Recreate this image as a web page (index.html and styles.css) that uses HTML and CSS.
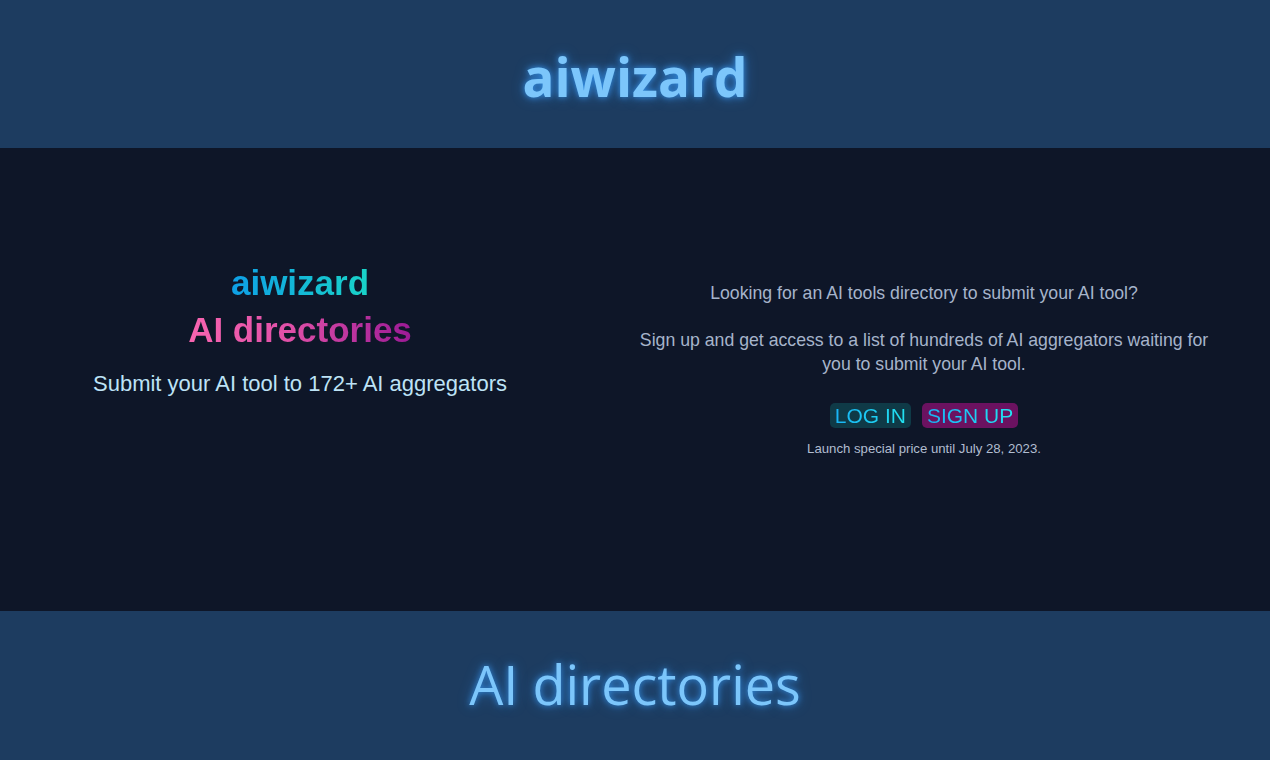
FILE: index.html
```html
<!DOCTYPE html>
<html>
<head>
<meta charset="utf-8">
<link rel="stylesheet" href="styles.css">
</head>
<body>
<header class="band top">
  <h1 class="glow bold">aiwizard</h1>
</header>
<main class="hero">
  <section class="left">
    <div class="brand">aiwizard</div>
    <div class="brand2">AI directories</div>
    <p class="sub">Submit your AI tool to 172+ AI aggregators</p>
  </section>
  <section class="right">
    <p class="p1">Looking for an AI tools directory to submit your AI tool?</p>
    <p class="p2">Sign up and get access to a list of hundreds of AI aggregators waiting for you to submit your AI tool.</p>
    <div class="btns">
      <a class="btn login"><span>LOG IN</span></a>
      <a class="btn signup"><span>SIGN UP</span></a>
    </div>
    <p class="note">Launch special price until July 28, 2023.</p>
  </section>
</main>
<footer class="band bottom">
  <h2 class="glow">AI directories</h2>
</footer>
</body>
</html>
```
FILE: styles.css
```css
* { box-sizing: border-box; }
html, body { margin: 0; padding: 0; }
body {
  background: #0e1628;
  font-family: "Liberation Sans", Arial, sans-serif;
  overflow: hidden;
}
.band {
  background: #1d3c60;
  display: flex;
  justify-content: center;
  align-items: center;
}
.top { height: 148px; }
.bottom { height: 149px; align-items: flex-start; }
.glow {
  margin: 0;
  font-family: "Open Sans", "Noto Sans", sans-serif;
  color: #7cc6fb;
  text-shadow: 0 0 6px rgba(56, 160, 255, 0.8), 0 0 14px rgba(56, 150, 255, 0.45);
}
h1.glow { font-size: 53px; font-weight: 700; line-height: 1; padding-top: 4px; }
h2.glow { font-size: 54px; font-weight: 400; line-height: 1; padding-top: 46px; }
.hero {
  height: 463px;
  display: grid;
  grid-template-columns: 520px 580px;
  column-gap: 74px;
  padding-left: 40px;
  align-items: start;
}
.left { text-align: center; padding-top: 111px; }
.brand, .brand2 {
  font-weight: 700;
  font-size: 35px;
  line-height: 47px;
  -webkit-background-clip: text;
  background-clip: text;
  color: transparent;
  display: inline-block;
}
.brand {
  background-image: linear-gradient(90deg, #0e9fe6, #19d3c8);
}
.brand2 {
  background-image: linear-gradient(90deg, #f865b0, #e050a8 45%, #9b1a95);
}
.left .brand, .left .brand2 { display: block; width: max-content; margin: 0 auto; }
.sub {
  margin: 18px 0 0;
  font-size: 22px;
  line-height: 26px;
  color: #bde3f6;
}
.right {
  text-align: center;
  padding-top: 133px;
  color: #a6b4cb;
  font-size: 17.7px;
  line-height: 24px;
}
.right p { margin: 0; }
.p2 { margin-top: 23px !important; }
.btns {
  display: flex;
  justify-content: center;
  gap: 11px;
  margin-top: 27px;
}
.btn {
  display: inline-block;
  font-size: 21px;
  line-height: 25px;
  padding: 0 5px;
  border-radius: 5px;
}
.btn span {
  -webkit-background-clip: text;
  background-clip: text;
  color: transparent;
  background-image: linear-gradient(90deg, #18b4f6, #22e2f0);
}
.login { background: #0f3a47; }
.signup { background: #6b1260; }
.note {
  margin-top: 13px !important;
  font-size: 13.2px;
  line-height: 16px;
  color: #b1bdd0;
}
```
